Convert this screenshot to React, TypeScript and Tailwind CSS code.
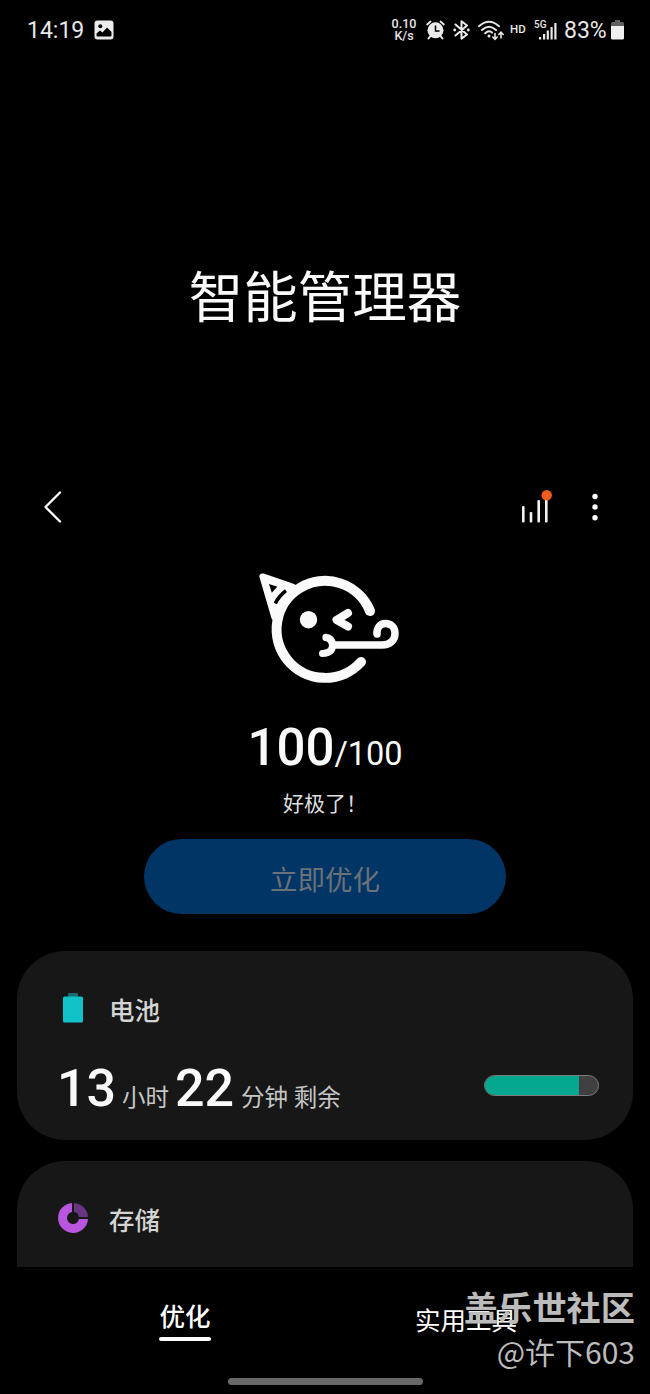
import type { ReactNode } from 'react';

const batteryLevel = 83;

function StatusBar() {
  return (
    <header className="flex h-[60px] items-center justify-between pl-[27px] pr-[26px] text-[#e8e8e8]">
      <div className="flex items-center gap-[10px]">
        <span className="text-[23px] leading-none">14:19</span>
        <svg className="h-[20px] w-[20px]" viewBox="0 0 20 20">
          <rect x="0.5" y="0.5" width="19" height="19" rx="3" fill="#ececec" />
          <circle cx="6.3" cy="6.3" r="2" fill="#000" />
          <path d="M2.5 15.5V13.5L6 10.5L8.5 12.5L13 7.5L17.5 12V15.5Q17.5 16.5 16.5 16.5H3.5Q2.5 16.5 2.5 15.5Z" fill="#000" />
        </svg>
      </div>

      <div className="flex items-center">
        <div className="mr-[9px] w-[26px] text-center text-[12.5px] font-medium leading-[12px]">
          <div>0.10</div>
          <div>K/s</div>
        </div>
        <AlarmIcon />
        <BluetoothIcon />
        <WifiIcon />
        <span className="mr-[8px] w-[16px] text-[11.5px] font-medium leading-none">HD</span>
        <SignalIcon />
        <span className="mr-[4px] w-[43px] text-[23px] leading-none">{batteryLevel}%</span>
        <svg className="h-[20px] w-[13px]" viewBox="0 0 13 20">
          <path d="M4 0H9V2H11.5Q13 2 13 3.5V6H0V3.5Q0 2 1.5 2H4Z" fill="#606060" />
          <path d="M0 6H13V18Q13 19.5 11.5 19.5H1.5Q0 19.5 0 18Z" fill="#f0f0f0" />
        </svg>
      </div>
    </header>
  );
}

function AlarmIcon() {
  return (
    <svg className="mr-[8px] h-[20px] w-[19px]" viewBox="0 0 19 20" fill="none" stroke="#ececec" strokeLinecap="round">
      <circle cx="9.5" cy="10.3" r="8" fill="#ececec" stroke="none" />
      <path d="M1.2 4.5L4.5 1.5M17.8 4.5L14.5 1.5" strokeWidth="1.8" />
      <path d="M4.5 16L2.5 18.5M14.5 16L16.5 18.5" strokeWidth="2" />
      <path d="M9.5 6V11H13" stroke="#000" strokeWidth="1.5" />
    </svg>
  );
}

function BluetoothIcon() {
  return (
    <svg className="mr-[8px] h-[20px] w-[17px]" viewBox="0 0 17 20" fill="none" stroke="#ececec" strokeWidth="2" strokeLinejoin="round" strokeLinecap="round">
      <path d="M2.5 4.5L14 14.5L8.5 18.7V1.3L14 5.5L2.5 15.5" />
      <circle cx="1.7" cy="10" r="1.4" fill="#ececec" stroke="none" />
      <circle cx="15.3" cy="10" r="1.4" fill="#ececec" stroke="none" />
    </svg>
  );
}

function WifiIcon() {
  return (
    <svg className="mr-[6px] h-[21px] w-[26px]" viewBox="0 0 26 21" fill="none" stroke="#e8e8e8" strokeWidth="2" strokeLinecap="round">
      <path d="M1 6.2Q11 -2.8 21 6.2" />
      <path d="M4 10Q11 3.4 18 10" />
      <path d="M7.2 13.3Q11 9.7 14 12.5" />
      <circle cx="11" cy="16" r="1.5" fill="#e8e8e8" stroke="none" />
      <path d="M17 13.5V19M14.8 17L17 19.3L19.2 17" strokeWidth="1.6" />
      <path d="M23 18V12.5M20.8 14.5L23 12.2L25.2 14.5" strokeWidth="1.6" />
    </svg>
  );
}

function SignalIcon() {
  return (
    <svg className="mr-[7px] h-[20px] w-[23px]" viewBox="0 0 23 20" fill="#e8e8e8">
      <text x="0" y="8" fontSize="10" fontWeight="500" fontFamily="Roboto, sans-serif">5G</text>
      <rect x="5" y="17" width="2.2" height="2.5" />
      <rect x="9" y="14" width="2.2" height="5.5" />
      <rect x="12.7" y="10.5" width="2.2" height="9" />
      <rect x="16.5" y="7" width="2.2" height="12.5" />
      <rect x="20.3" y="3" width="2.2" height="16.5" />
    </svg>
  );
}

function Toolbar() {
  return (
    <div className="flex h-[60px] items-center justify-between pl-[42px] pr-[50px]">
      <svg className="h-[36px] w-[22px]" viewBox="0 0 22 36" fill="none" stroke="#fff" strokeWidth="2.3" strokeLinecap="round" strokeLinejoin="round">
        <path d="M18 3.5L3.5 18L18 32.5" />
      </svg>
      <div className="flex items-center">
        <svg className="mr-[38px] h-[36px] w-[34px]" viewBox="0 0 34 36">
          <g fill="#f2f2f2">
            <rect x="4" y="17" width="2.6" height="16.5" rx="1" />
            <rect x="11.7" y="23" width="2.6" height="10.5" rx="1" />
            <rect x="19.4" y="11" width="2.6" height="22.5" rx="1" />
            <rect x="27" y="8" width="2.6" height="25.5" rx="1" />
          </g>
          <circle cx="28.7" cy="6.3" r="5.2" fill="#f25c1c" />
        </svg>
        <svg className="h-[36px] w-[10px]" viewBox="0 0 10 36" fill="#fff">
          <circle cx="5" cy="7.5" r="2.7" />
          <circle cx="5" cy="18" r="2.7" />
          <circle cx="5" cy="28.7" r="2.7" />
        </svg>
      </div>
    </div>
  );
}

function PartyFace() {
  return (
    <svg className="ml-[10px] h-[140px] w-[180px]" viewBox="0 0 180 140" fill="none" stroke="#fafafa" strokeLinecap="round" strokeLinejoin="round">
      {/* hat */}
      <path d="M22.7 16.7L53 27L34.5 57Z" fill="#fafafa" strokeWidth="6.5" />
      <path d="M29 24L37.3 26.7L31.8 32.7Z" fill="#000" stroke="none" />
      <path d="M35.3 43.5Q38.5 36.5 46 30.8" stroke="#000" strokeWidth="3.6" strokeLinecap="butt" />
      {/* head */}
      <path d="M130 51A48.5 48.5 0 1 0 121 102" strokeWidth="10" />
      <circle cx="68.5" cy="59.7" r="8.7" fill="#fafafa" stroke="none" />
      <path d="M108 53L96.5 60L108 66.5" strokeWidth="8" />
      {/* mouth and blower */}
      <path d="M86 77.5Q91.5 78 92.5 84.5" strokeWidth="7.3" />
      <path d="M92.5 85.5Q92.5 93 82.5 93.5" strokeWidth="7" />
      <path d="M94 85H142C150 85 155 80 155 73.5C155 67 151 63.5 145.5 63.5C140 63.5 136.5 68 137 74" strokeWidth="7.5" />
    </svg>
  );
}

function Score() {
  return (
    <section className="flex flex-col items-center">
      <PartyFace />
      <div className="mt-[20px] flex h-[57px] items-baseline text-[#fafafa]">
        <span className="text-[51px] font-medium leading-[56px]">100</span>
        <span className="text-[32.5px] leading-[56px]">/100</span>
      </div>
      <p className="mt-[12px] h-[30px] text-[21px] leading-[30px] text-[#dedede]">好极了！</p>
      <button className="mt-[20px] h-[75px] w-[362px] rounded-full bg-[#003566] pt-[8px] text-[27.5px] text-[#6b7178]">
        立即优化
      </button>
    </section>
  );
}

function CardTitle({ icon, label }: { icon: ReactNode; label: string }) {
  return (
    <div className="flex h-[36px] items-center">
      <div className="mr-[20px] flex w-[32px] justify-center pb-[2px]">{icon}</div>
      <h2 className="pt-[3px] text-[25.5px] font-medium leading-[36px] text-[#d4d4d4]">{label}</h2>
    </div>
  );
}

function BatteryCard() {
  return (
    <section className="mx-[17px] h-[189px] rounded-[48px] bg-[#171717] pl-[40px] pr-[34px] pt-[40px]">
      <CardTitle
        label="电池"
        icon={
          <svg className="h-[30px] w-[20px]" viewBox="0 0 20 30">
            <rect x="5" y="0" width="10" height="4" rx="1" fill="#176b6d" />
            <rect x="0" y="3.5" width="20" height="26" rx="1.5" fill="#10c1c8" />
          </svg>
        }
      />
      <div className="mt-[32px] flex items-center justify-between">
        <div className="flex items-baseline text-[23.5px] leading-[60px] text-[#c6c6c6]">
          <span className="w-[65px] text-[52px] font-medium text-[#fafafa]">13</span>
          <span className="w-[53px]">小时</span>
          <span className="w-[66px] text-[52px] font-medium text-[#fafafa]">22</span>
          <span>分钟 剩余</span>
        </div>
        <div className="mb-[16px] h-[21px] w-[115px] overflow-hidden rounded-full border border-[#7b7b7b] bg-[#404042]">
          <div className="h-full bg-[#04a78f]" style={{ width: `${batteryLevel}%` }} />
        </div>
      </div>
    </section>
  );
}

function StorageCard() {
  return (
    <section className="mx-[17px] mt-[21px] h-[106px] rounded-t-[48px] bg-[#171717] pl-[40px] pt-[40px]">
      <CardTitle
        label="存储"
        icon={
          <svg className="h-[30px] w-[30px]" viewBox="0 0 30 30">
            <path d="M14 0V9.1A6 6 0 1 0 20.9 16H30A15 15 0 1 1 14 0Z" fill="#b956df" />
            <path d="M16 0A15 15 0 0 1 30 14H20.9A6 6 0 0 0 16 9.1Z" fill="#683580" />
          </svg>
        }
      />
    </section>
  );
}

function BottomNav() {
  return (
    <nav className="relative flex h-[127px] flex-col items-center">
      <div className="flex h-[111px] w-full px-[44px] text-white">
        <div className="flex w-[282px] flex-col items-center pt-[31px]">
          <span className="text-[25.5px] font-medium leading-[38px]">优化</span>
          <span className="mt-[1px] h-[4px] w-[52px] rounded-full bg-white" />
        </div>
        <div className="flex w-[280px] justify-center pt-[35px]">
          <span className="text-[25.5px] leading-[38px]">实用工具</span>
        </div>
      </div>
      <div className="h-[7px] w-[195px] rounded-full bg-[#686868]" />

      {/* community watermark over the tabs */}
      <div className="absolute right-[15px] top-[19px] text-right text-[#bcbcbc]">
        <div className="text-[34.2px] font-bold leading-[46px]">盖乐世社区</div>
        <div className="-mt-[3px] font-[Noto_Sans_CJK_SC,sans-serif] text-[30px] leading-[44px]">@许下603</div>
      </div>
    </nav>
  );
}

export default function App() {
  return (
    <main className="flex h-[1394px] w-[650px] flex-col overflow-hidden bg-black font-[Roboto,Noto_Sans_CJK_SC,sans-serif]">
      <StatusBar />
      <h1 className="flex h-[417px] items-center justify-center pt-[60px] text-[54.5px] text-[#fafafa]">智能管理器</h1>
      <Toolbar />
      <div className="mt-[23px] h-[391px]">
        <Score />
      </div>
      <BatteryCard />
      <StorageCard />
      <BottomNav />
    </main>
  );
}
